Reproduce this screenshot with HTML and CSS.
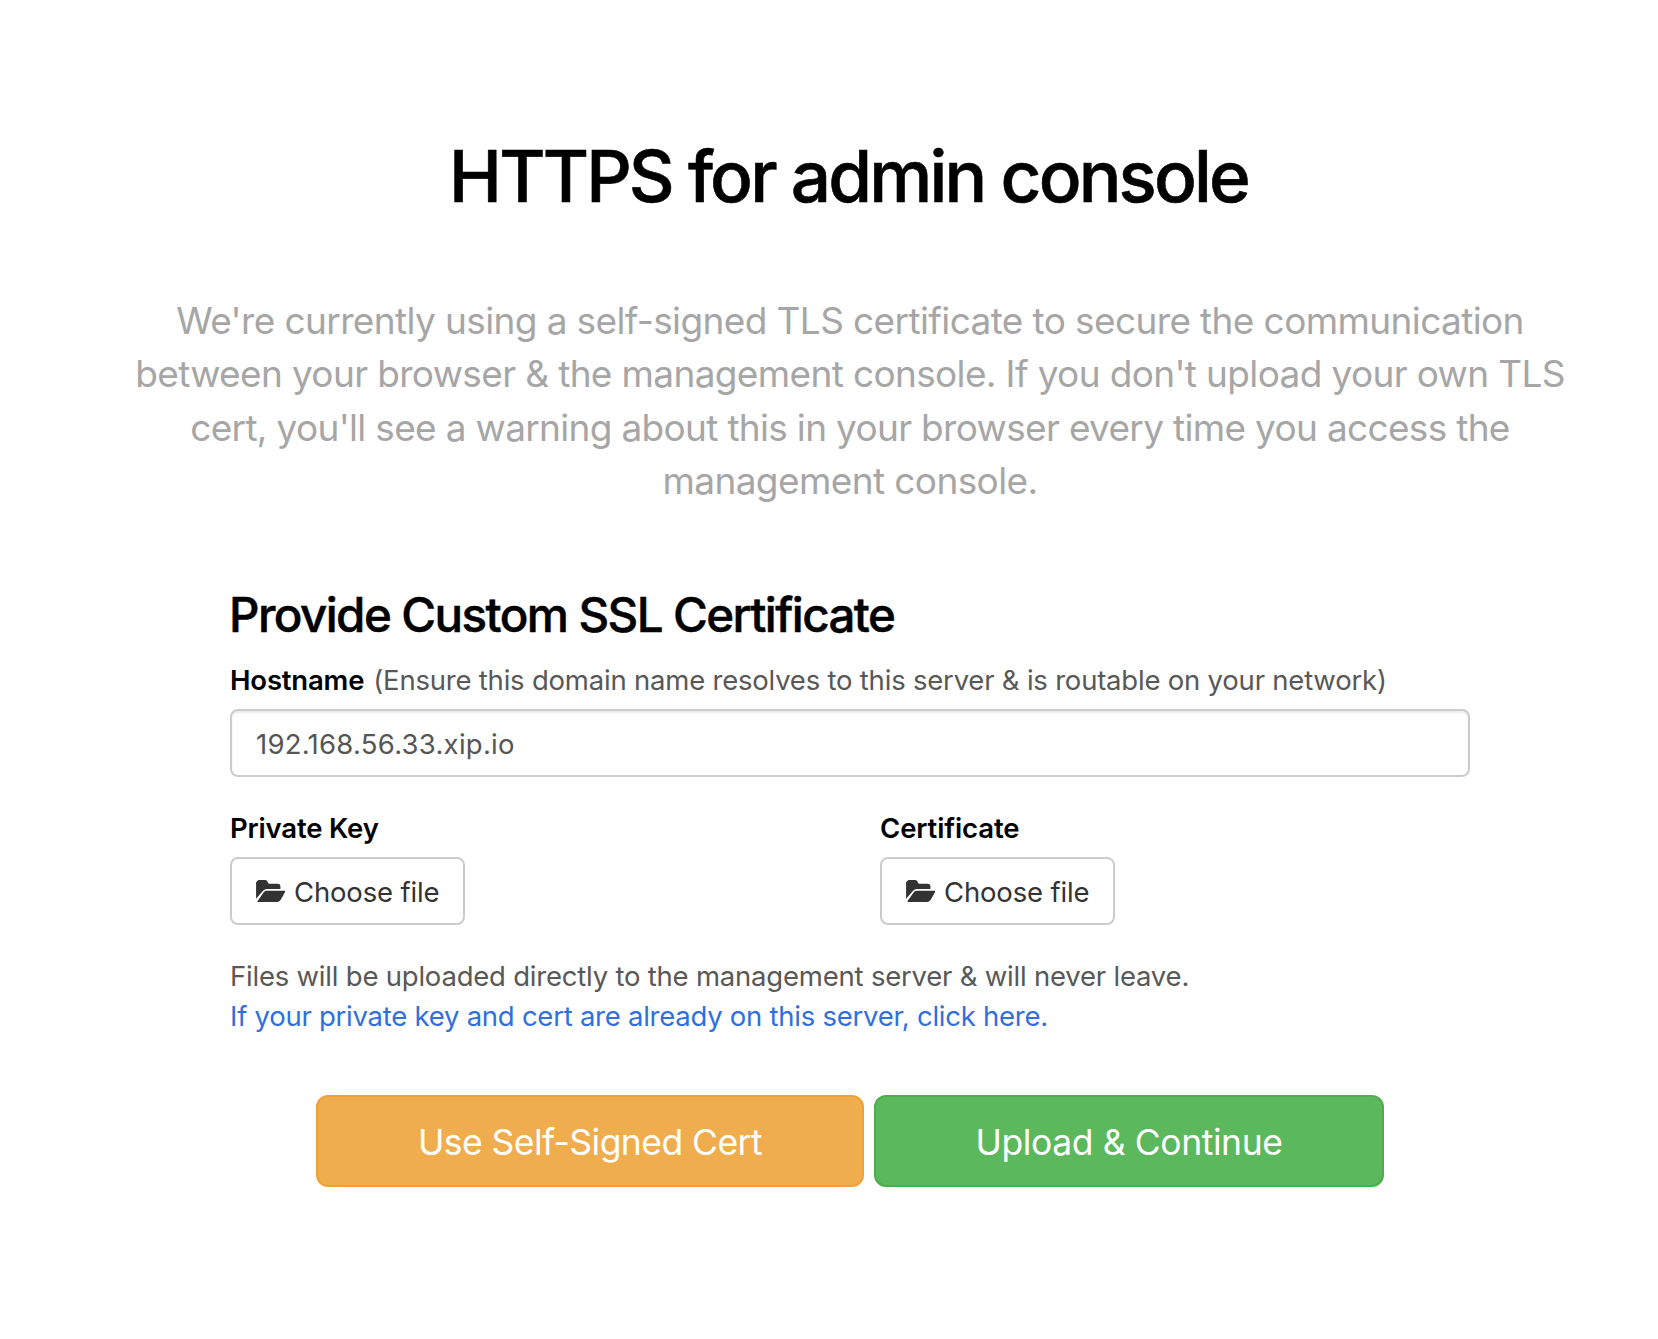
FILE: index.html
```html
<!DOCTYPE html>
<html lang="en">
<head>
<meta charset="utf-8">
<title>HTTPS for admin console</title>
<link rel="stylesheet" href="styles.css">
</head>
<body>
<svg class="sprite" aria-hidden="true">
  <symbol id="folder-open" viewBox="0 0 88 66">
    <path d="M0 56V7L7 0H27Q31 0 33 3L38 11H65Q72 11 73 18V27H32Q26 27 21 32Z"/>
    <path d="M31 32H86Q89 33 87 36L74 59Q69 66 63 66H6Q2 66 5 62L22 38Q26 32 31 32Z"/>
  </symbol>
</svg>
<main class="page">
  <h1 class="title">HTTPS for admin console</h1>
  <p class="lead">
    <span class="lead-first">We're currently using a self-signed TLS certificate to secure the communication</span><br>
    <span>between your browser &amp; the management console. If you don't upload your own TLS</span><br>
    <span class="lead-third">cert, you'll see a warning about this in your browser every time you access the</span><br>
    <span class="lead-last">management console.</span>
  </p>
  <form class="form">
    <h2 class="subtitle">Provide Custom SSL Certificate</h2>
    <div class="field-head"><label class="label" for="hostname">Hostname</label><span class="hint">(Ensure this domain name resolves to this server &amp; is routable on your network)</span></div>
    <input class="input" id="hostname" type="text" value="192.168.56.33.xip.io">
    <div class="files">
      <div class="file">
        <span class="label">Private Key</span>
        <button class="choose" type="button"><svg class="icon"><use href="#folder-open"/></svg>Choose file</button>
      </div>
      <div class="file">
        <span class="label label-cert">Certificate</span>
        <button class="choose" type="button"><svg class="icon"><use href="#folder-open"/></svg>Choose file</button>
      </div>
    </div>
    <p class="note">Files will be uploaded directly to the management server &amp; will never leave.</p>
    <a class="link" href="#">If your private key and cert are already on this server, click here.</a>
    <div class="actions">
      <button class="btn btn-warning" type="button">Use Self-Signed Cert</button>
      <button class="btn btn-success" type="button">Upload &amp; Continue</button>
    </div>
  </form>
</main>
</body>
</html>
```
FILE: styles.css
```css
* { box-sizing: border-box; }

body {
  margin: 0;
  background: #fff;
  color: #000;
  font: 400 27.5px/40px Inter, "Liberation Sans", sans-serif;
}

h1, h2, p { margin: 0; }

.sprite { display: none; }

.page {
  display: flex;
  flex-direction: column;
  align-items: center;
  margin-left: 42px;
  padding-top: 136px;
}

.title {
  margin-right: 3px;
  font-size: 71px;
  font-weight: 500;
  line-height: 80px;
  letter-spacing: -2.85px;
  -webkit-text-stroke: 0.6px #000;
}

.lead {
  margin-top: 78px;
  color: #a6a6a6;
  font-size: 37px;
  line-height: 53.3px;
  letter-spacing: -0.645px;
  text-align: center;
  white-space: nowrap;
}

.lead-first { letter-spacing: -0.618px; }
.lead-third { letter-spacing: -0.68px; }
.lead-last { letter-spacing: -0.6px; }

.form {
  display: flex;
  flex-direction: column;
  width: 1240px;
  margin-top: 81px;
}

.subtitle {
  margin: 1px 0 0 -1px;
  font-size: 47.5px;
  font-weight: 500;
  line-height: 52px;
  letter-spacing: -1.58px;
  -webkit-text-stroke: 0.5px #000;
}

.field-head {
  display: flex;
  gap: 9px;
  margin-top: 19px;
  white-space: nowrap;
}

.label {
  font-weight: 600;
  letter-spacing: -0.18px;
}

.label-cert { letter-spacing: -0.12px; }

.hint {
  color: #585858;
  letter-spacing: -0.21px;
}

.input {
  height: 68px;
  margin-top: 9px;
  padding: 2px 24px 0;
  border: 2px solid #ccc;
  border-radius: 8px;
  background: #fff;
  box-shadow: inset 0 2px 2px rgba(0, 0, 0, 0.075);
  color: #555;
  font: inherit;
  letter-spacing: 0.257px;
}

.files {
  display: grid;
  grid-template-columns: 650px 1fr;
  margin-top: 31px;
}

.file {
  display: flex;
  flex-direction: column;
  align-items: flex-start;
  gap: 9px;
}

.choose {
  display: flex;
  align-items: center;
  gap: 8.5px;
  width: 235px;
  height: 68px;
  padding: 2px 0 0 24px;
  border: 2px solid #ccc;
  border-radius: 8px;
  background: #fff;
  color: #333;
  font: inherit;
  letter-spacing: -0.16px;
  white-space: nowrap;
}

.icon {
  width: 29.5px;
  height: 22px;
  margin-top: -2px;
  fill: #333;
}

.note {
  margin-top: 31px;
  color: #585858;
  letter-spacing: -0.21px;
}

.link {
  color: #2f70dd;
  letter-spacing: -0.255px;
  text-decoration: none;
}

.actions {
  display: flex;
  justify-content: center;
  gap: 10px;
  margin-top: 59px;
}

.btn {
  height: 92px;
  padding: 4px 0 0;
  border: 2px solid;
  border-radius: 12px;
  color: #fff;
  font: inherit;
  font-size: 35.5px;
}

.btn-warning {
  width: 548px;
  border-color: #eea236;
  background: #f0ad4e;
  letter-spacing: -0.55px;
}

.btn-success {
  width: 510px;
  border-color: #4cae4c;
  background: #5cb85c;
  letter-spacing: -0.4px;
}
```
